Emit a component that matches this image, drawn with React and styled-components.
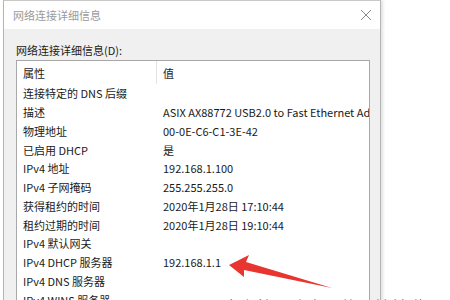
import React from "react";
import styled, { createGlobalStyle } from "styled-components";

const Global = createGlobalStyle`
  html, body { margin: 0; padding: 0; background: #ffffff; overflow: hidden; }
  body { font-family: "Noto Sans CJK SC", "Noto Sans", sans-serif; }
`;

const Page = styled.div`
  position: relative;
  width: 450px;
  height: 300px;
  overflow: hidden;
  background: #ffffff;
  padding-left: 3px;
  box-sizing: border-box;
`;

const Window = styled.div`
  width: 378px;
  height: 330px;
  box-sizing: border-box;
  border: 1px solid #b4b4b4;
  border-top-color: #c8c8c8;
  box-shadow: 2px 0 3px rgba(0, 0, 0, 0.12);
  display: flex;
  flex-direction: column;
  background: #f0f0f0;
`;

const TitleBar = styled.div`
  height: 28px;
  flex: none;
  background: #ffffff;
  display: flex;
  align-items: center;
  justify-content: space-between;
  padding: 0 8px 0 9px;
`;

const Title = styled.span`
  font-size: 11px;
  color: #9a9a9a;
  letter-spacing: 0;
`;

const Body = styled.div`
  flex: 1;
  padding: 12px 10px 0 12px;
  display: flex;
  flex-direction: column;
`;

const Label = styled.div`
  font-size: 11px;
  color: #1a1a1a;
  line-height: 18px;
  height: 19px;
`;

const ListBox = styled.div`
  width: 354px;
  border: 1px solid #a8a8a8;
  background: #ffffff;
  box-sizing: border-box;
  height: 260px;
`;

const Header = styled.div`
  display: grid;
  grid-template-columns: 140px 1fr;
  height: 23px;
  align-items: center;
`;

const HeadCell = styled.div`
  font-size: 11px;
  color: #1a1a1a;
  padding-left: ${(p) => p.$pad}px;
  height: 100%;
  display: flex;
  align-items: center;
  border-right: ${(p) => (p.$sep ? "1px solid #e3e3e3" : "none")};
`;

const Row = styled.div`
  display: grid;
  grid-template-columns: 140px 1fr;
  height: 18.75px;
  align-items: center;
`;

const Cell = styled.div`
  font-size: 11px;
  color: #1a1a1a;
  padding-left: ${(p) => p.$pad}px;
  white-space: nowrap;
  overflow: hidden;
  line-height: 18px;
`;

const Overlay = styled.svg`
  position: absolute;
  left: 0;
  top: 0;
  pointer-events: none;
`;

const Annotation = styled.div`
  position: absolute;
  left: 222px;
  top: 294px;
  font-size: 16px;
  color: #e53935;
  white-space: nowrap;
  letter-spacing: 1px;
`;

const rows = [
  ["连接特定的 DNS 后缀", ""],
  ["描述", "ASIX AX88772 USB2.0 to Fast Ethernet Adapter"],
  ["物理地址", "00-0E-C6-C1-3E-42"],
  ["已启用 DHCP", "是"],
  ["IPv4 地址", "192.168.1.100"],
  ["IPv4 子网掩码", "255.255.255.0"],
  ["获得租约的时间", "2020年1月28日 17:10:44"],
  ["租约过期的时间", "2020年1月28日 19:10:44"],
  ["IPv4 默认网关", ""],
  ["IPv4 DHCP 服务器", "192.168.1.1"],
  ["IPv4 DNS 服务器", ""],
  ["IPv4 WINS 服务器", ""],
];

export default function App() {
  return (
    <Page>
      <Global />
      <Window>
        <TitleBar>
          <Title>网络连接详细信息</Title>
          <svg width="12" height="12" viewBox="0 0 12 12">
            <path d="M1 1 L11 11 M11 1 L1 11" stroke="#8a8a8a" strokeWidth="1" fill="none" />
          </svg>
        </TitleBar>
        <Body>
          <Label>网络连接详细信息(D):</Label>
          <ListBox>
            <Header>
              <HeadCell $pad={6} $sep>属性</HeadCell>
              <HeadCell $pad={6}>值</HeadCell>
            </Header>
            {rows.map(([k, v], i) => (
              <Row key={i}>
                <Cell $pad={6}>{k}</Cell>
                <Cell $pad={6}>{v}</Cell>
              </Row>
            ))}
          </ListBox>
        </Body>
      </Window>
      <Annotation>这个就是路由器的IP地址啦</Annotation>
      <Overlay width="450" height="300" viewBox="0 0 450 300">
        <polygon
          points="229,265 249,255 246,262 332,288 244,270 244,277"
          fill="#e8352f"
        />
      </Overlay>
    </Page>
  );
}
